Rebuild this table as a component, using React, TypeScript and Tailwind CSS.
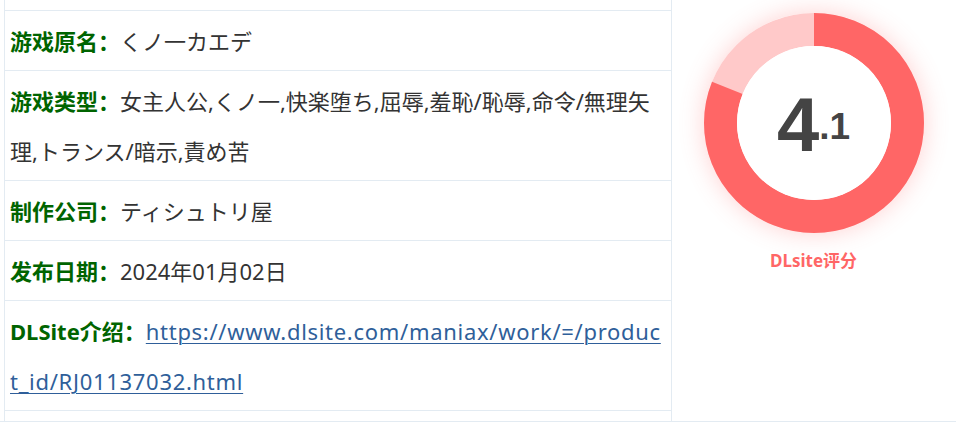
import React from "react";

const rows: { label: string; value: React.ReactNode }[] = [
  { label: "游戏原名：", value: "くノ一カエデ" },
  {
    label: "游戏类型：",
    value: "女主人公,くノ一,快楽堕ち,屈辱,羞恥/恥辱,命令/無理矢理,トランス/暗示,責め苦",
  },
  { label: "制作公司：", value: "ティシュトリ屋" },
  { label: "发布日期：", value: "2024年01月02日" },
  {
    label: "DLSite介绍：",
    value: (
      <a
        href="#"
        className="text-[#2f5f9a] underline decoration-1 underline-offset-[3px] break-all tracking-[0.7px]"
      >
        https://www.dlsite.com/maniax/work/=/product_id/RJ01137032.html
      </a>
    ),
  },
];

function Donut() {
  const r = 93.5;
  const c = 2 * Math.PI * r;
  const pct = 0.81;
  return (
    <div className="relative w-[220px] h-[220px] rounded-full shadow-[0_0_24px_rgba(255,102,102,0.3)]">
      <svg width="220" height="220" viewBox="0 0 220 220" className="absolute inset-0">
        <circle cx="110" cy="110" r={r} fill="none" stroke="#ffc9c9" strokeWidth="33" />
        <circle
          cx="110"
          cy="110"
          r={r}
          fill="none"
          stroke="#ff6666"
          strokeWidth="33"
          strokeDasharray={`${c * pct} ${c}`}
          transform="rotate(-90 110 110)"
        />
        <circle cx="110" cy="110" r="77" fill="#ffffff" />
      </svg>
      <div className="absolute inset-0 flex items-center justify-center">
        <div className="flex items-baseline text-[#444444] font-bold leading-none pt-[4px] font-['Liberation_Sans',Arial,sans-serif]">
          <span className="text-[76px]">4</span>
          <span className="text-[37px] relative -top-[12px]">.1</span>
        </div>
      </div>
    </div>
  );
}

export default function App() {
  return (
    <div className="w-[956px] h-[422px] bg-white border-b border-[#e3ebf2] flex overflow-hidden font-['Noto_Sans','Noto_Sans_CJK_SC',sans-serif]">
      <div className="ml-[4px] w-[668px] border-l border-r border-[#e3ebf2] pt-[10px]">
        {rows.map((r, i) => (
          <div
            key={i}
            className={`border-t border-[#e3ebf2] px-[5px] pt-[5px] pb-[4px] text-[22px] leading-[50px] text-[#333333] ${
              i === rows.length - 1 ? "border-b" : ""
            }`}
          >
            <span className="font-bold text-[#006400]">{r.label}</span>
            <span>{r.value}</span>
          </div>
        ))}
      </div>
      <div className="flex-1 flex flex-col items-center pt-[13px] pr-[1px]">
        <Donut />
        <div className="mt-[16px] text-[17px] leading-[24px] font-bold text-[#ff6666]">
          DLsite评分
        </div>
      </div>
    </div>
  );
}
